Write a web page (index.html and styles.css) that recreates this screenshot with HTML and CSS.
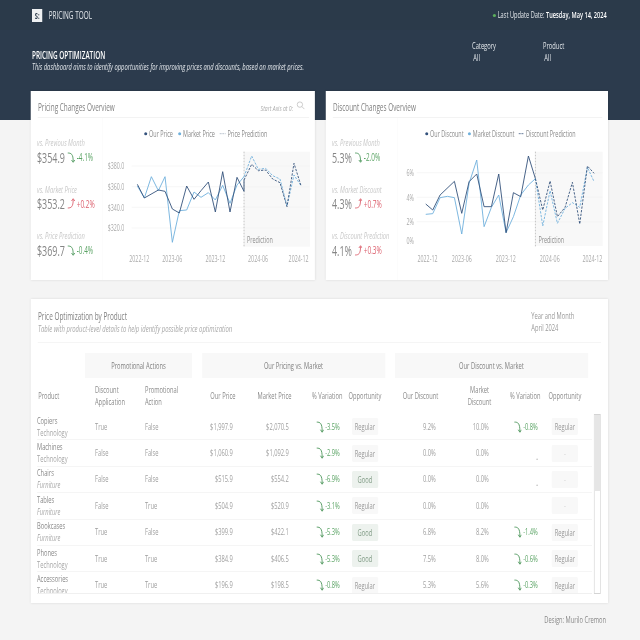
FILE: index.html
```html
<!DOCTYPE html>
<html>
<head>
<meta charset="UTF-8">
<title>Pricing Tool</title>
<link rel="stylesheet" href="styles.css">
</head>
<body>
<div class="page">
	<!-- top bar -->
	<div class="topbar">
		<div class="brand"><span class="logo">S:</span><span>PRICING TOOL</span></div>
		<div class="update"><span class="dot"></span>Last Update Date: <b>Tuesday, May 14, 2024</b></div>
	</div>

	<!-- title and filters -->
	<div class="hero">
		<div>
			<div class="hero-title">PRICING OPTIMIZATION</div>
			<div class="hero-sub">This dashboard aims to identify opportunities for improving prices and discounts, based on market prices.</div>
		</div>
		<div class="filters">
			<div class="filter"><div>Category</div><div class="filter-val">All</div></div>
			<div class="filter"><div>Product</div><div class="filter-val">All</div></div>
		</div>
	</div>

	<div class="overview">
		<!-- pricing card -->
		<div class="card card-left">
			<div class="card-head">
				<span class="card-title">Pricing Changes Overview</span>
				<span class="start-axis">Start Axis at 0: <svg class="search" viewBox="0 0 10 10" preserveAspectRatio="none"><circle cx="4" cy="4" r="3"/><path d="M6.2 6.2 9 9"/></svg></span>
			</div>
			<div class="card-body">
				<div class="kpis">
					<div class="kpi">
						<div class="kpi-label">vs. Previous Month</div>
						<div class="kpi-row"><span class="kpi-val">$354.9</span><svg class="arrow down" viewBox="0 0 8 11" preserveAspectRatio="none"><path d="M.5 1C4 1 6 2 6 9.5M4.3 8 6 10.3 7.6 8"/></svg><span class="delta good">-4.1%</span></div>
					</div>
					<div class="kpi">
						<div class="kpi-label">vs. Market Price</div>
						<div class="kpi-row"><span class="kpi-val">$353.2</span><svg class="arrow up" viewBox="0 0 8 11" preserveAspectRatio="none"><path d="M.5 10C4 10 6 9 6 1.5M4.3 3 6 .7 7.6 3"/></svg><span class="delta bad">+0.2%</span></div>
					</div>
					<div class="kpi">
						<div class="kpi-label">vs. Price Prediction</div>
						<div class="kpi-row"><span class="kpi-val">$369.7</span><svg class="arrow down" viewBox="0 0 8 11" preserveAspectRatio="none"><path d="M.5 1C4 1 6 2 6 9.5M4.3 8 6 10.3 7.6 8"/></svg><span class="delta good">-0.4%</span></div>
					</div>
				</div>
				<svg class="chart chart-left" viewBox="234 -6 994 486">
					<g transform="translate(234 0) scale(1.5625 1) translate(-234 0)">
						<rect class="pred-bg" x="657" y="95" width="198" height="285"/>
						<path class="grid" d="M320 138H855M320 200H855M320 262H855M320 324H855"/>
						<path class="pred-line" d="M657 95V380"/>
						<circle class="c-dark" cx="362" cy="41" r="4.5"/>
						<circle class="c-light" cx="464" cy="41" r="4.5"/>
						<path class="legend-dash" d="M584 41H602"/>
						<polyline class="l-light" points="337,198 358,234 379,170 400,212 420,170 442,367 463,272 485,270 507,216 528,232 550,218 571,240 593,196 615,250 636,195 657,170"/>
						<polyline class="l-dark" points="337,193 358,234 400,210 420,214 442,267 463,279 485,198 507,238 528,212 550,186 571,276 593,155 615,276 636,172 657,214 657,180"/>
						<polyline class="l-light dash" points="657,170 680,108 700,148 722,145 743,167 765,177 786,258 807,165 828,197"/>
						<polyline class="l-dark dash" points="657,180 680,133 700,152 722,150 743,177 765,188 786,260 807,130 828,197"/>
					</g>
					<text x="450" y="50">Our Price</text><text x="609" y="50">Market Price</text><text x="818" y="50">Price Prediction</text>
					<g class="axis">
						<text x="256" y="148">$380.0</text><text x="256" y="210">$360.0</text><text x="256" y="272">$340.0</text><text x="256" y="334">$320.0</text>
						<text x="357" y="426">2022-12</text><text x="512" y="426">2023-06</text><text x="714" y="426">2023-12</text><text x="914" y="426">2024-06</text><text x="1104" y="426">2024-12</text>
					</g>
					<text class="pred-text" x="909" y="370">Prediction</text>
				</svg>
			</div>
		</div>

		<!-- discount card -->
		<div class="card card-right">
			<div class="card-head">
				<span class="card-title">Discount Changes Overview</span>
			</div>
			<div class="card-body">
				<div class="kpis">
					<div class="kpi">
						<div class="kpi-label">vs. Previous Month</div>
						<div class="kpi-row"><span class="kpi-val">5.3%</span><svg class="arrow down" viewBox="0 0 8 11" preserveAspectRatio="none"><path d="M.5 1C4 1 6 2 6 9.5M4.3 8 6 10.3 7.6 8"/></svg><span class="delta good">-2.0%</span></div>
					</div>
					<div class="kpi">
						<div class="kpi-label">vs. Market Discount</div>
						<div class="kpi-row"><span class="kpi-val">4.3%</span><svg class="arrow up" viewBox="0 0 8 11" preserveAspectRatio="none"><path d="M.5 10C4 10 6 9 6 1.5M4.3 3 6 .7 7.6 3"/></svg><span class="delta bad">+0.7%</span></div>
					</div>
					<div class="kpi">
						<div class="kpi-label">vs. Discount Prediction</div>
						<div class="kpi-row"><span class="kpi-val">4.1%</span><svg class="arrow up" viewBox="0 0 8 11" preserveAspectRatio="none"><path d="M.5 10C4 10 6 9 6 1.5M4.3 3 6 .7 7.6 3"/></svg><span class="delta bad">+0.3%</span></div>
					</div>
				</div>
				<svg class="chart chart-right" viewBox="234 -6 984 486">
					<g transform="translate(234 0) scale(1.5625 1) translate(-234 0)">
						<rect class="pred-bg" x="646" y="95" width="202" height="283"/>
						<path class="grid" d="M290 158H848M290 232H848M290 305H848"/>
						<path class="pred-line" d="M646 95V380"/>
						<circle class="c-dark" cx="320" cy="41" r="4.5"/>
						<circle class="c-light" cx="448" cy="41" r="4.5"/>
						<path class="legend-dash dark" d="M596 41H612"/>
						<polyline class="l-light" points="317,283 338,281 360,233 382,229 403,233 425,342 447,190 470,120 492,320 514,262 536,225 558,338 580,290 602,225 625,195 646,176"/>
						<polyline class="l-dark" points="317,252 338,270 360,225 403,184 425,280 447,185 470,162 492,260 514,260 536,162 558,338 580,218 602,230 625,108 646,176"/>
						<polyline class="l-light dash" points="646,176 668,318 690,212 712,310 735,265 757,248 779,262 802,142 822,185"/>
						<polyline class="l-dark dash" points="646,176 668,270 690,183 712,290 735,262 757,187 779,312 802,138 822,160"/>
					</g>
					<text x="384" y="50">Our Discount</text><text x="584" y="50">Market Discount</text><text x="834" y="50">Discount Prediction</text>
					<g class="axis">
						<text x="273" y="168">6%</text><text x="273" y="242">4%</text><text x="273" y="315">2%</text><text x="273" y="372">0%</text>
						<text x="325" y="426">2022-12</text><text x="486" y="426">2023-06</text><text x="692" y="426">2023-12</text><text x="898" y="426">2024-06</text><text x="1098" y="426">2024-12</text>
					</g>
					<text class="pred-text" x="892" y="368">Prediction</text>
				</svg>
			</div>
		</div>
	</div>

	<!-- product table -->
	<div class="card table-card">
		<div class="table-head">
			<div>
				<div class="card-title">Price Optimization by Product</div>
				<div class="table-sub">Table with product-level details to help identify possible price optimization</div>
			</div>
			<div class="period"><div>Year and Month</div><div>April 2024</div></div>
		</div>
		<div class="groups">
			<div class="group g-promo">Promotional Actions</div>
			<div class="group g-price">Our Pricing vs. Market</div>
			<div class="group g-disc">Our Discount vs. Market</div>
		</div>
		<div class="row row-head">
			<div>Product</div><div>Discount<br>Application</div><div>Promotional<br>Action</div>
			<div class="num">Our Price</div><div class="num">Market Price</div><div class="num">% Variation</div><div class="mid">Opportunity</div>
			<div class="num">Our Discount</div><div class="num narrow">Market<br>Discount</div><div class="num">% Variation</div><div class="mid">Opportunity</div>
		</div>
		<div class="table-wrap">
			<div class="rows">
				<div class="row">
					<div class="prod">Copiers<br><span>Technology</span></div><div>True</div><div>False</div><div class="num">$1,997.9</div><div class="num">$2,070.5</div>
					<div class="num var"><svg class="arrow down" viewBox="0 0 8 11" preserveAspectRatio="none"><path d="M.5 1C4 1 6 2 6 9.5M4.3 8 6 10.3 7.6 8"/></svg>-3.5%</div><div class="mid"><span class="badge">Regular</span></div>
					<div class="num">9.2%</div><div class="num">10.0%</div>
					<div class="num var"><svg class="arrow down" viewBox="0 0 8 11" preserveAspectRatio="none"><path d="M.5 1C4 1 6 2 6 9.5M4.3 8 6 10.3 7.6 8"/></svg>-0.8%</div><div class="mid"><span class="badge">Regular</span></div>
				</div>
				<div class="row">
					<div class="prod">Machines<br><span>Technology</span></div><div>False</div><div>False</div><div class="num">$1,060.9</div><div class="num">$1,092.9</div>
					<div class="num var"><svg class="arrow down" viewBox="0 0 8 11" preserveAspectRatio="none"><path d="M.5 1C4 1 6 2 6 9.5M4.3 8 6 10.3 7.6 8"/></svg>-2.9%</div><div class="mid"><span class="badge">Regular</span></div>
					<div class="num">0.0%</div><div class="num">0.0%</div>
					<div class="num none">.</div><div class="mid"><span class="badge empty">-</span></div>
				</div>
				<div class="row">
					<div class="prod">Chairs<br><span class="cat">Furniture</span></div><div>False</div><div>False</div><div class="num">$515.9</div><div class="num">$554.2</div>
					<div class="num var"><svg class="arrow down" viewBox="0 0 8 11" preserveAspectRatio="none"><path d="M.5 1C4 1 6 2 6 9.5M4.3 8 6 10.3 7.6 8"/></svg>-6.9%</div><div class="mid"><span class="badge good-badge">Good</span></div>
					<div class="num">0.0%</div><div class="num">0.0%</div>
					<div class="num none">.</div><div class="mid"><span class="badge empty">-</span></div>
				</div>
				<div class="row">
					<div class="prod">Tables<br><span class="cat">Furniture</span></div><div>False</div><div>True</div><div class="num">$504.9</div><div class="num">$520.9</div>
					<div class="num var"><svg class="arrow down" viewBox="0 0 8 11" preserveAspectRatio="none"><path d="M.5 1C4 1 6 2 6 9.5M4.3 8 6 10.3 7.6 8"/></svg>-3.1%</div><div class="mid"><span class="badge">Regular</span></div>
					<div class="num">0.0%</div><div class="num">0.0%</div>
					<div class="num"></div><div class="mid"><span class="badge empty">-</span></div>
				</div>
				<div class="row">
					<div class="prod">Bookcases<br><span class="cat">Furniture</span></div><div>True</div><div>False</div><div class="num">$399.9</div><div class="num">$422.1</div>
					<div class="num var"><svg class="arrow down" viewBox="0 0 8 11" preserveAspectRatio="none"><path d="M.5 1C4 1 6 2 6 9.5M4.3 8 6 10.3 7.6 8"/></svg>-5.3%</div><div class="mid"><span class="badge good-badge">Good</span></div>
					<div class="num">6.8%</div><div class="num">8.2%</div>
					<div class="num var"><svg class="arrow down" viewBox="0 0 8 11" preserveAspectRatio="none"><path d="M.5 1C4 1 6 2 6 9.5M4.3 8 6 10.3 7.6 8"/></svg>-1.4%</div><div class="mid"><span class="badge">Regular</span></div>
				</div>
				<div class="row">
					<div class="prod">Phones<br><span>Technology</span></div><div>True</div><div>True</div><div class="num">$384.9</div><div class="num">$406.5</div>
					<div class="num var"><svg class="arrow down" viewBox="0 0 8 11" preserveAspectRatio="none"><path d="M.5 1C4 1 6 2 6 9.5M4.3 8 6 10.3 7.6 8"/></svg>-5.3%</div><div class="mid"><span class="badge good-badge">Good</span></div>
					<div class="num">7.5%</div><div class="num">8.0%</div>
					<div class="num var"><svg class="arrow down" viewBox="0 0 8 11" preserveAspectRatio="none"><path d="M.5 1C4 1 6 2 6 9.5M4.3 8 6 10.3 7.6 8"/></svg>-0.6%</div><div class="mid"><span class="badge">Regular</span></div>
				</div>
				<div class="row">
					<div class="prod">Accessories<br><span>Technology</span></div><div>True</div><div>True</div><div class="num">$196.9</div><div class="num">$198.5</div>
					<div class="num var"><svg class="arrow down" viewBox="0 0 8 11" preserveAspectRatio="none"><path d="M.5 1C4 1 6 2 6 9.5M4.3 8 6 10.3 7.6 8"/></svg>-0.8%</div><div class="mid"><span class="badge">Regular</span></div>
					<div class="num">5.3%</div><div class="num">5.6%</div>
					<div class="num var"><svg class="arrow down" viewBox="0 0 8 11" preserveAspectRatio="none"><path d="M.5 1C4 1 6 2 6 9.5M4.3 8 6 10.3 7.6 8"/></svg>-0.3%</div><div class="mid"><span class="badge">Regular</span></div>
				</div>
			</div>
			<div class="scrollbar"><div class="thumb"></div></div>
		</div>
	</div>

	<div class="footer">Design: Murilo Cremon</div>
</div>
</body>
</html>
```

FILE: styles.css
```css
html,
body {
  width: 640px;
  height: 640px;
  overflow: clip;
}
body {
  margin: 0;
  background-color: #f4f4f4;
}

/* the whole dashboard is 1000px wide, squeezed into the 640px window */
.page {
  width: 1000px;
  height: 640px;
  overflow: clip;
  transform: scaleX(0.64);
  transform-origin: 0 0;
  filter: blur(0.3px);
  background-color: #f4f4f4;
  color: #8a8a8a;
  font-family: "Open Sans", sans-serif;
  font-size: 9px;
}

/* Header */
.topbar {
  height: 30px;
  padding: 0 52px 0 50px;
  display: flex;
  align-items: center;
  justify-content: space-between;
  background-color: #2b3a4a;
  color: #e4e8ec;
}
.brand {
  display: flex;
  align-items: center;
  gap: 10px;
  font-size: 10px;
}
.logo {
  width: 16px;
  height: 13px;
  background-color: #eef0f2;
  color: #2b3a4a;
  font-size: 9px;
  font-weight: 700;
  line-height: 13px;
  text-align: center;
}
.update {
  font-size: 8.8px;
}
.update b {
  color: #fff;
  font-weight: 600;
}
.dot {
  display: inline-block;
  width: 5px;
  height: 3px;
  margin-right: 3px;
  border-radius: 50%;
  background-color: #5cae5c;
  vertical-align: 1px;
}
.hero {
  height: 90px;
  padding: 0 40.5px 0 50px;
  display: flex;
  justify-content: space-between;
  background-color: #2c3b4d;
  color: #e4e8ec;
}
.hero-title {
  margin-top: 19px;
  font-size: 10px;
  font-weight: 600;
  line-height: 12px;
  color: #fff;
}
.hero-sub {
  font-size: 9.1px;
  font-style: italic;
  line-height: 12px;
}
.filters {
  display: flex;
  flex: none;
  margin-top: 10px;
  width: 222px;
  line-height: 12px;
}
.filter {
  width: 111px;
  flex: none;
}
.filter-val {
  padding-left: 2px;
}

/* Cards */
.overview {
  display: flex;
  gap: 17.2px;
  margin: -29px 50px 0 48.4px;
}
.card {
  background-color: #fff;
  box-shadow: 0 0 3px rgba(0, 0, 0, 0.12);
}
.card-left {
  width: 443.75px;
}
.card-right {
  width: 440.6px;
}
.card-head {
  height: 27px;
  margin: 0 9.4px 0 10.9px;
  padding: 6px 6px 0 0;
  display: flex;
  align-items: center;
  justify-content: space-between;
  border-bottom: 1px solid #f3f3f3;
  box-sizing: border-box;
}
.card-title {
  font-size: 10px;
  color: #808080;
}
.start-axis {
  display: flex;
  align-items: center;
  gap: 5px;
  font-size: 8px;
  font-style: italic;
  color: #aaa;
}
.search {
  width: 14px;
  height: 9px;
  margin-bottom: 4px;
  fill: none;
  stroke: #bbb;
  stroke-width: 0.8;
}
.card-body {
  display: flex;
  height: 162px;
}
.kpis {
  width: 112.5px;
  flex: none;
  padding: 19px 0 0 9.4px;
  box-sizing: border-box;
  border-right: 1px solid #fafafa;
}
.kpi {
  height: 46.5px;
}
.kpi-label {
  font-size: 9px;
  font-style: italic;
  line-height: 12px;
  color: #c8c8c8;
  white-space: nowrap;
}
.kpi-row {
  display: flex;
  align-items: center;
  height: 16px;
  white-space: nowrap;
}
.kpi-val {
  font-size: 14px;
  color: #858585;
  margin-right: 4px;
}
.arrow {
  width: 12.5px;
  height: 11px;
  flex: none;
  fill: none;
  stroke-width: 0.8;
}
.arrow.down {
  stroke: #3f8f4f;
}
.arrow.up {
  stroke: #d8505f;
}
.delta {
  margin-left: 2px;
  font-size: 10px;
  font-weight: 500;
}
.good {
  color: #5aa364;
}
.bad {
  color: #dc5f6d;
}

/* Charts */
.chart {
  height: 162px;
  flex: none;
}
.chart-left {
  width: 331.25px;
}
.chart-right {
  width: 328px;
}
.chart text {
  font-size: 25.5px;
  fill: #8a8a8a;
}
.chart .axis text {
  fill: #aaa;
  font-size: 25px;
}
.chart .pred-text {
  fill: #8f8f8f;
}
.pred-bg {
  fill: #f8f8f8;
}
.grid {
  stroke: #f3f3f3;
  stroke-width: 2;
  fill: none;
}
.pred-line {
  stroke: #aaa;
  stroke-width: 2;
  stroke-dasharray: 5 4;
}
.c-dark {
  fill: #34527c;
}
.c-light {
  fill: #6fb0dc;
}
.legend-dash {
  stroke: #aeb9c6;
  stroke-width: 2.5;
  stroke-dasharray: 6 2;
}
.legend-dash.dark {
  stroke: #4a6488;
}
.l-dark,
.l-light {
  fill: none;
  stroke-width: 2.7;
}
.l-dark {
  stroke: #34527c;
}
.l-light {
  stroke: #6fb0dc;
}
.dash {
  stroke-dasharray: 7 4;
}

/* Table */
.table-card {
  margin: 19px 50px 0 48.4px;
  height: 304px;
  padding: 0 10.9px 9px 9.4px;
  box-sizing: border-box;
}
.table-head {
  height: 44px;
  margin-left: 1.6px;
  display: flex;
  justify-content: space-between;
  border-bottom: 1px solid #f5f5f5;
  box-sizing: border-box;
  padding-top: 11px;
}
.table-sub {
  font-style: italic;
  font-size: 9.3px;
  line-height: 12px;
  color: #a8a8a8;
}
.table-head .card-title {
  line-height: 13px;
}
.period {
  width: 109px;
  line-height: 12px;
  color: #999;
}
.groups {
  display: flex;
  margin-top: 10px;
  height: 25px;
}
.group {
  display: flex;
  align-items: center;
  justify-content: center;
  background-color: #f8f8f8;
  color: #808080;
}
.g-promo {
  width: 167.2px;
  margin-left: 75px;
}
.g-price {
  width: 286px;
  margin-left: 15.6px;
}
.g-disc {
  width: 301.6px;
  margin-left: 15.6px;
}
.row {
  display: grid;
  grid-template-columns: 90.6px 78.1px 89px 48.4px 87.5px 79.7px 78.1px 71.9px 82.8px 76.6px 84.4px;
  align-items: center;
  height: 26.4px;
  border-bottom: 1px solid #f5f5f5;
  box-sizing: border-box;
  color: #a0a0a0;
  line-height: 12px;
}
.row-head {
  height: 36px;
  border-bottom: none;
  color: #8a8a8a;
}
.row-head div:first-child {
  padding-left: 2px;
}
.num {
  text-align: right;
  white-space: nowrap;
}
.row-head .num {
  margin-right: -4px;
}
.row-head .narrow {
  justify-self: end;
  text-align: center;
}
.mid {
  text-align: center;
}
.prod {
  color: #8a8a8a;
  white-space: nowrap;
}
.prod span {
  color: #a8a8a8;
}
.prod .cat {
  font-style: italic;
}
.var {
  display: flex;
  justify-content: flex-end;
  align-items: center;
  gap: 2px;
  color: #5aa364;
  font-weight: 500;
}
.var .arrow {
  height: 12px;
}
.none {
  padding-top: 8px;
  font-weight: 700;
}
.badge {
  display: inline-block;
  width: 41px;
  line-height: 17px;
  border-radius: 2px;
  background-color: #f8f8f8;
  color: #999;
}
.good-badge {
  background-color: #edf2ee;
  color: #7f9a84;
}
.empty {
  color: #ccc;
}
.table-wrap {
  display: flex;
  height: 180px;
  overflow: hidden;
}
.rows {
  width: 867.2px;
  flex: none;
  height: 180px;
  overflow: hidden;
  border-bottom: 1px solid #f0f0f0;
  box-sizing: border-box;
}
.scrollbar {
  width: 14px;
  margin-left: 3px;
  box-sizing: border-box;
  border: 1px solid #d4d4d4;
  background-color: #fff;
}
.thumb {
  height: 76px;
  background-color: #e6e6e6;
}

.footer {
  margin: 11px 53px 0 0;
  text-align: right;
  color: #888;
  line-height: 12px;
}
```
